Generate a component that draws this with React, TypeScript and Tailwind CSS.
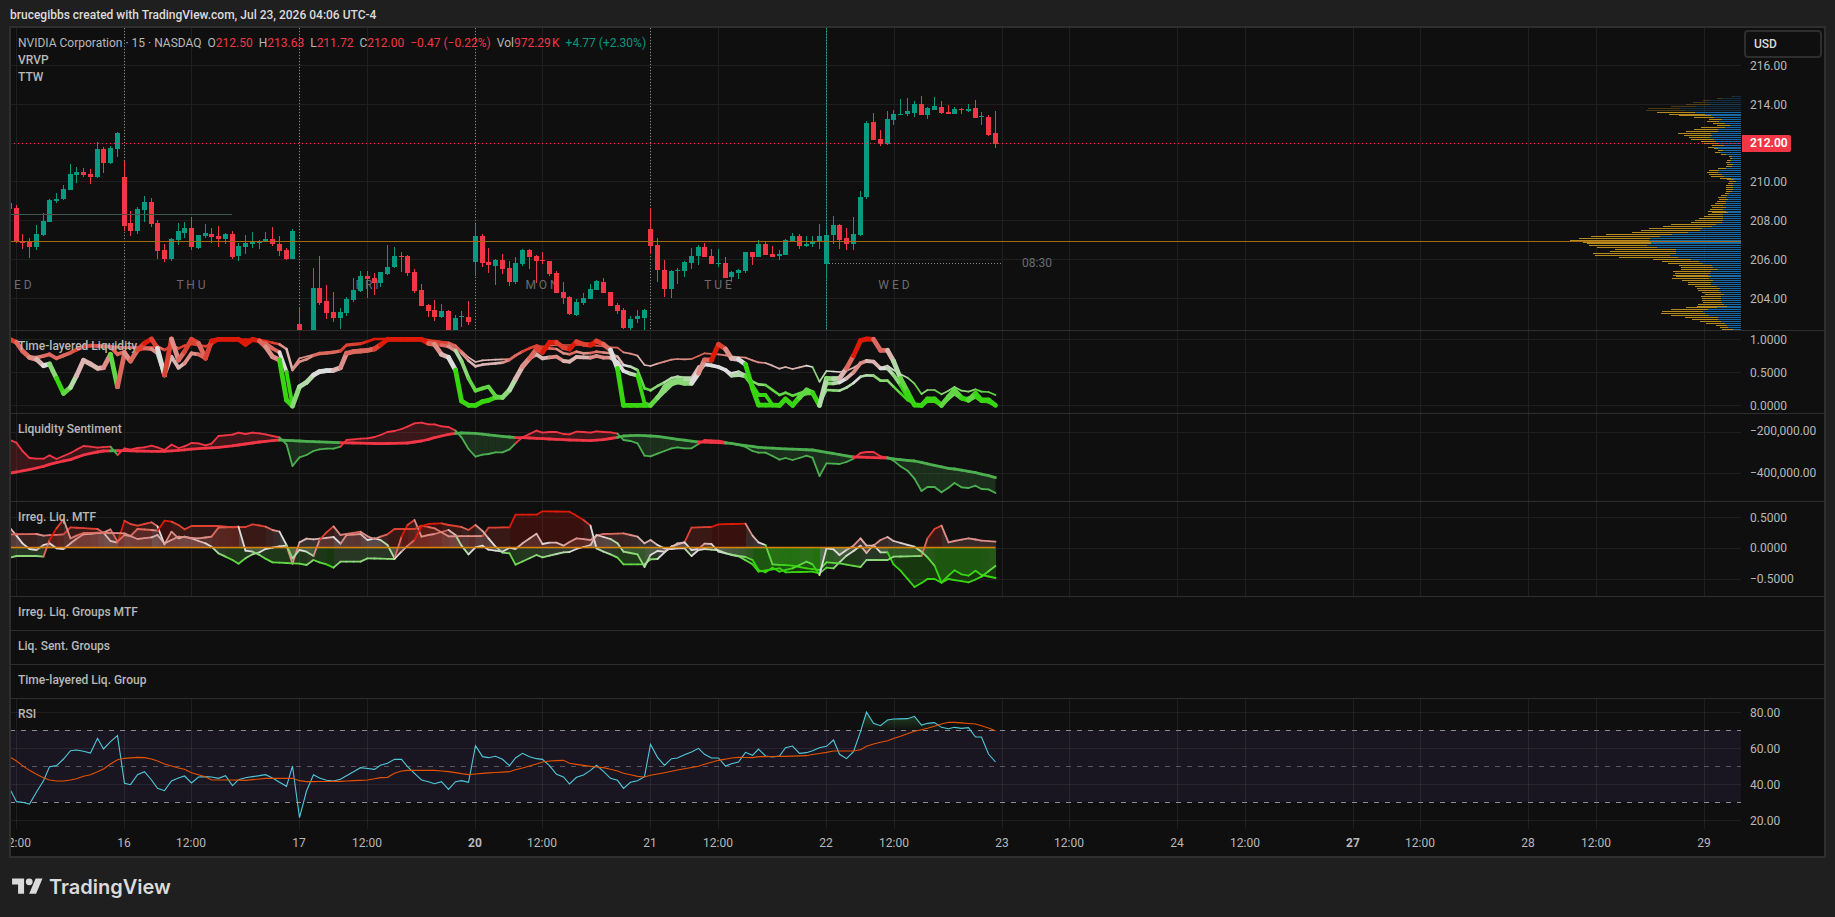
import React from "react";

type Point = [number, number, number?];
type Tick = [number, string];

const UP = "#089981";
const DOWN = "#f23645";
const GRID = "#1f1f1f";
const SUB = 3; // indicator readings are kept at a third of a pixel

// bar index -> pixel column of the plot
const barX = (i: number) => Math.floor(16.1 + 6.753 * i) - 11 + 0.5;

// index, direction, high, body top, body bottom, low
const candles: Record<number, [string, number, number, number, number]> = {};
const rawCandles = `
-1 r 203 203 209 209|0 r 205 208 242 243|1 r 234 241 243 249|2 r 238 242 247 258|3 g 225 234 247 250
4 g 213 221 235 236|5 g 199 200 222 222|6 g 193 199 201 203|7 g 185 189 199 200|8 g 164 174 190 190
9 g 167 172 175 183|10 r 168 172 175 177|11 r 169 174 177 184|12 g 142 149 177 178|13 r 147 149 163 173
14 g 146 148 163 164|15 g 132 133 149 157|16 r 161 177 226 231|17 r 211 223 231 236|18 g 207 209 231 234
19 g 196 202 210 222|20 r 198 202 224 227|21 r 220 223 251 259|22 r 244 250 259 262|23 g 238 239 259 261
24 g 223 231 240 245|25 g 222 228 233 238|26 r 217 228 247 250|27 g 235 235 248 249|28 g 224 233 236 238
29 r 228 234 237 243|30 r 226 236 239 247|31 g 233 234 239 244|32 r 231 234 257 259|33 g 243 246 256 261
34 g 235 243 247 254|35 g 232 242 244 248|36 g 240 241 243 249|37 g 232 239 242 242|38 r 227 239 244 246
39 r 236 244 251 256|40 r 248 250 259 260|41 g 229 231 259 259|42 r 307 324 330 330|44 g 268 288 330 330
45 r 256 288 303 305|46 r 285 301 313 319|47 r 292 312 318 322|48 g 308 312 318 329|49 g 297 299 313 316
50 g 278 290 300 302|51 g 271 276 291 292|52 r 271 276 279 298|53 r 273 278 283 295|54 g 272 272 283 287
55 g 245 267 274 275|56 g 247 256 267 268|57 r 252 256 257 272|58 r 255 256 273 276|59 r 269 272 291 293
60 r 284 290 306 306|61 r 304 305 311 317|62 r 300 310 317 321|63 g 304 311 317 318|64 r 310 311 330 330
65 g 315 318 330 330|66 g 311 316 317 327|67 r 301 317 322 325|68 g 224 236 262 276|69 r 234 236 263 267
70 r 248 262 265 273|71 g 259 260 266 285|72 r 254 260 269 274|73 r 261 268 282 286|74 g 257 263 282 284
75 g 249 250 264 266|76 r 249 250 257 269|77 r 255 256 261 283|78 r 252 260 261 264|79 r 261 261 274 276
80 r 271 273 293 293|81 r 282 292 298 304|82 r 296 297 314 315|83 g 299 302 315 316|84 g 293 298 303 305
85 g 284 289 299 299|86 g 280 281 290 290|87 r 278 282 293 293|88 r 292 292 306 306|89 r 303 305 311 314
90 r 308 310 328 329|91 g 316 319 328 330|92 g 310 316 319 323|93 g 309 310 318 330|94 r 208 229 246 254
95 r 238 245 270 282|96 r 260 270 289 297|97 g 270 271 289 298|98 g 268 270 271 284|99 g 261 262 271 277
100 g 248 256 263 269|101 g 245 247 256 265|102 r 243 247 257 257|103 r 249 256 264 264|104 g 249 263 264 267
105 r 257 263 278 278|106 g 271 272 277 282|107 g 269 270 273 279|108 g 252 252 271 273|109 r 252 252 257 265
110 g 240 244 257 257|111 r 241 244 255 255|112 r 246 254 257 257|113 g 250 254 256 260|114 g 239 240 255 255
115 g 233 236 241 241|116 r 234 236 246 249|117 g 236 244 246 247|118 g 236 241 244 247|119 g 224 236 242 249
120 g 230 235 264 279|121 g 216 225 235 244|122 r 224 225 240 249|123 r 228 238 244 250|124 g 217 234 244 250
125 g 191 197 235 236|126 g 121 123 197 199|127 r 113 122 140 140|128 r 130 139 144 146|129 g 111 119 144 145
130 g 110 114 120 125|131 g 99 114 115 115|132 g 98 111 114 116|133 g 101 104 113 117|134 r 96 104 115 115
135 g 107 108 115 119|136 g 97 106 110 110|137 r 101 107 113 114|138 r 105 112 114 114|139 g 107 109 114 114
140 r 108 109 110 114|141 g 104 109 111 112|142 r 100 108 118 118|143 g 112 116 117 125|144 r 115 117 135 136
145 r 111 133 144 148`;
rawCandles
  .trim()
  .split(/[|\n]/)
  .forEach((row) => {
    const [i, dir, h, t, b, l] = row.trim().split(" ");
    candles[Number(i)] = [dir, Number(h), Number(t), Number(b), Number(l)];
  });

// volume profile rows: total length, up-volume length
const profile = `9,8 24,19 38,32 48,35 55,31 70,45 93,61 95,56 84,46 72,36 62,30 47,27 32,19 34,22 28,16 24,11 40,16
47,23 55,23 63,30 57,29 52,31 50,27 40,25 37,22 29,17 33,27 27,23 23,18 26,21 20,15 12,9 11,9 14,10 15,11 14,8
15,9 23,15 32,22 34,23 32,19 30,17 21,10 14,7 12,5 13,8 15,8 15,8 15,8 15,9 16,12 20,14 23,15 22,13 24,15 26,15
30,18 29,15 31,18 33,15 29,13 33,18 37,18 42,18 46,18 50,19 70,25 78,29 92,39 100,41 109,53 135,69 150,81
162,91 171,92 158,90 154,90 152,94 144,84 126,65 131,65 148,65 146,71 122,63 88,50 79,42 73,38 62,29 60,28
60,23 68,30 66,31 68,33 65,30 69,32 59,28 53,30 53,30 46,24 44,21 43,22 39,20 36,17 40,20 39,20 39,20 38,19
43,17 44,14 55,24 70,33 79,38 80,36 70,32 56,23 49,23 41,20 35,16 25,14 21,13 19,8`
  .split(/\s+/)
  .map((r) => r.split(",").map(Number));

// "index:reading:heat" list, skipped bars are interpolated
const parse = (s: string): Point[] => {
  const keys = s
    .trim()
    .split(/\s+/)
    .map((p) => p.split(":").map(Number));
  const out: Point[] = [];
  keys.forEach(([i, y, c = 5], k) => {
    if (k > 0) {
      const [pi, py, pc = 5] = keys[k - 1];
      for (let j = pi + 1; j < i; j++) {
        const f = (j - pi) / (i - pi);
        out.push([j, py + (y - py) * f, pc + (c - pc) * f]);
      }
    }
    out.push([i, y, c]);
  });
  return out;
};

const layered = [
  {
    width: 1.7,
    points: parse(
      `41:130:6 42:100:7 44:89:7 45:83:8 47:79:8 48:75:8 49:58:9 51:54:9 53:42:10 60:42:10 62:47:10 64:52:9 65:60:9
      66:78:8 67:97:7 68:111:6 69:106:6 72:103:6 73:102:7 74:90:8 75:78:8 76:69:9 77:60:9 78:65:9 79:62:9 80:60:8
      83:60:9 86:62:9 88:67:8 89:68:8 90:82:8 91:86:7 92:92:7 93:120:6 94:123:6 95:116:6 96:110:7 97:104:7
      98:102:7 99:103:7 100:102:7 101:93:8 102:85:8 104:88:8 106:94:7 108:98:7 109:106:7 110:112:7 111:114:7
      112:122:6 113:131:6 114:126:6 115:132:6 117:122:6 118:126:5 119:170:3 120:138:4 122:141:5 123:137:6
      124:128:6 125:115:6 126:106:6 127:110:6 128:128:6 129:122:6 130:135:5 131:148:4 132:158:4 133:176:3
      134:207:2 135:195:3 136:195:3 137:208:2 138:197:3 139:186:3 140:197:3 141:200:3 142:193:3 143:200:2
      144:201:2 145:210:2`
    ),
  },
  {
    width: 2.6,
    points: parse(
      `-1:43:9 0:52:9 1:78:8 2:97:8 3:98:7 5:88:8 6:100:8 8:83:8 10:65:9 11:62:9 14:65:8 16:68:8 20:68:8 21:64:9
      22:75:8 23:63:9 24:70:8 25:62:9 26:57:9 28:64:9 29:58:9 30:44:10 36:44:10 37:48:10 39:58:9 40:72:7 41:135:6
      42:110:7 43:103:7 44:92:7 45:87:8 47:83:8 48:79:8 49:61:9 51:57:9 53:42:10 60:42:10 62:50:9 64:54:9 65:65:8
      66:84:8 67:107:7 68:124:6 69:119:6 70:117:6 72:113:6 73:105:7 74:92:8 75:80:8 76:70:9 77:63:9 78:72:9
      79:70:9 80:72:8 81:85:7 82:88:7 83:80:8 84:85:7 85:84:7 86:80:8 88:85:7 89:95:7 90:120:6 91:125:5 92:135:4
      93:190:2 94:196:2 95:183:3 96:172:3 97:159:4 98:155:4 99:158:4 100:158:4 101:125:6 102:118:6 104:126:5
      106:145:5 107:140:5 108:150:4 109:170:3 110:178:3 111:180:3 112:195:2 113:210:2 114:203:2 115:212:2
      116:205:2 117:197:2 118:200:2 119:237:1 120:195:3 122:197:3 123:188:4 124:174:4 125:155:5 126:151:4
      127:152:4 128:167:3 129:167:3 130:185:3 131:205:2 132:225:1 133:236:0 134:241:0 135:225:1 136:226:1
      137:240:1 138:220:2 139:205:2 140:222:2 142:215:2 145:240:0`
    ),
  },
  {
    width: 3.8,
    points: parse(
      `-1:43:9 0:52:9 1:78:8 2:97:8 3:98:7 5:88:8 6:100:8 8:83:8 10:65:9 11:62:9 14:65:8 15:88:8 16:80:8 17:108:7
      18:75:8 19:70:9 20:72:8 21:85:7 22:150:4 23:95:6 24:128:6 25:115:6 26:85:7 27:88:7 28:100:8 29:50:9
      30:43:10 33:43:10 34:58:10 35:43:10 36:47:10 37:55:9 38:70:8 39:82:8 40:140:5 41:241:0 42:185:3 43:172:4
      44:150:4 45:140:5 47:136:5 48:128:6 49:85:7 50:80:8 52:76:8 53:70:8 54:58:9 55:44:10 60:44:10 61:52:9
      62:55:9 63:60:9 64:64:8 65:77:7 66:108:4 67:160:3 68:197:2 69:190:2 70:185:2 71:213:2 72:217:2 73:195:3
      74:162:4 75:122:6 76:100:6 77:88:7 78:100:6 79:97:6 80:95:7 81:108:7 82:110:6 83:96:6 85:98:6 86:93:7
      87:98:7 88:98:7 89:112:6 90:138:5 91:146:5 92:152:4 93:235:1 94:241:1 95:218:1 96:184:3 97:170:3 98:164:3
      99:166:3 100:168:4 101:140:5 102:118:5 103:121:5 104:126:5 105:135:5 106:152:5 107:150:4 108:154:4
      109:182:2 110:210:1 111:210:1 112:240:0 113:241:0 114:222:1 115:241:0 116:212:1 117:205:2 118:205:2
      119:241:1 120:175:3 121:175:3 122:172:4 123:160:5 124:142:6 125:115:7 126:108:7 127:110:6 128:130:6
      129:130:5 130:150:4 131:180:3 132:215:1 133:240:1 134:241:0 135:228:1 136:228:1 137:241:1 138:220:2
      139:205:3 140:220:2 141:227:1 142:215:2 143:228:1 144:229:1 145:241:0`
    ),
  },
  {
    width: 4.8,
    points: parse(
      `-1:43:9 0:52:9 1:78:8 2:97:8 3:103:7 4:122:6 5:117:5 6:160:3 7:205:1 8:187:2 9:152:4 10:106:6 11:117:6
      12:130:6 13:128:6 14:88:7 15:185:2 16:85:8 17:108:7 18:75:8 19:55:9 20:42:10 21:70:9 22:150:5 23:42:9
      24:105:7 25:80:8 26:43:9 27:55:9 28:100:8 29:48:9 30:43:10 33:43:10 34:58:10 35:43:10 36:48:10 37:65:8
      38:95:7 39:105:7 40:225:1 41:243:0 42:185:3 43:172:4 44:150:4 45:140:5 46:137:5 47:136:5 48:128:6 49:85:7
      50:80:8 52:76:8 53:72:8 54:60:9 55:43:10 60:43:10 61:55:10 62:58:8 63:88:7 64:97:6 65:135:5 66:228:1
      67:241:0 68:241:0 69:230:1 70:226:1 71:217:1 72:217:2 73:195:3 74:162:4 75:125:6 76:100:7 77:72:8 78:82:9
      79:52:10 80:52:10 81:68:9 82:72:9 83:50:10 84:58:9 85:60:9 86:48:10 87:58:9 88:75:8 89:130:5 90:241:0
      94:241:0 95:218:2 96:197:3 97:177:3 98:171:3 99:175:3 100:175:3 101:145:5 102:105:7 103:105:8 104:58:10
      105:72:9 106:100:7 107:103:6 108:118:5 109:190:1 110:240:0 113:241:0 114:222:1 115:241:0 116:218:1
      117:195:2 118:203:2 119:241:0 120:160:4 121:161:3 122:160:4 123:130:6 124:92:8 125:47:10 126:42:10
      127:43:10 128:76:8 129:76:8 130:108:6 131:160:4 132:200:2 133:240:1 134:241:0 135:222:1 136:222:1
      137:241:1 138:215:2 139:195:2 140:218:2 141:225:1 142:205:2 143:225:1 144:225:1 145:241:0`
    ),
  },
];

const sentimentFast = parse(
  `-1:345 0:353 1:378 2:399 3:401 4:401 5:391 6:402 7:393 8:384 9:374 10:363 11:365 12:368 14:365 15:390 16:370
  17:374 18:369 19:367 20:362 21:367 22:375 23:359 24:369 25:364 26:354 27:355 28:361 29:356 30:333 31:331
  32:329 33:323 34:327 35:323 36:325 37:328 38:333 39:337 40:358 41:423 42:397 43:390 44:378 45:373 46:371
  47:371 48:365 49:345 50:343 51:341 52:340 53:336 54:330 55:321 56:318 57:312 58:305 59:295 60:293 61:298
  62:298 63:304 64:306 65:317 66:337 67:372 68:395 69:389 70:387 71:382 72:382 73:373 74:355 75:337 76:327
  77:317 78:323 79:321 80:321 81:327 82:328 83:320 84:321 85:323 86:319 87:321 88:322 89:326 90:345 91:348
  92:355 93:392 94:394 95:386 96:378 97:370 98:367 99:370 100:370 101:357 102:345 104:347 105:351 106:356
  107:360 108:366 109:378 110:383 111:383 112:393 113:404 114:399 115:405 116:399 117:392 118:398 119:453
  120:415 122:417 123:411 124:401 125:384 126:381 127:381 128:394 129:397 130:407 131:424 132:437 133:461
  134:498 135:486 136:486 137:502 138:488 139:474 140:487 141:489 142:482 143:492 144:493 145:504`
);
const sentimentSlow = parse(
  `-1:445 0:441 2:434 4:424 5:418 7:408 8:404 10:390 11:385 12:381 13:378 15:377 16:377 20:379 22:379 24:376
  27:371 30:367 33:360 36:351 39:345 40:346 44:350 48:353 50:354 54:356 58:354 60:348 62:338 64:328 65:325
  66:324 68:325 71:332 74:338 75:338 78:341 82:345 85:347 87:344 89:337 90:333 92:331 95:334 98:343 101:351
  102:351 104:353 106:355 107:359 110:367 113:371 118:375 120:382 124:396 129:399 130:402 133:408 138:430
  139:432 142:443 144:452 145:458`
);

const irregular = [
  parse(
    `-1:607:6 0:632:6 1:655:5 2:672:5 3:675:5 4:660:6 5:655:5 6:670:5 7:672:5 8:655:6 10:628:7 13:623:6 14:648:6
    15:653:6 16:587:10 17:597:9 18:602:9 19:597:9 20:592:9 21:604:8 22:658:5 23:620:7 24:640:7 25:635:6 26:640:6
    27:648:6 28:655:6 29:665:5 30:685:4 31:695:3 32:705:2 33:716:2 34:700:2 35:688:3 36:682:4 37:672:5 39:664:5
    40:662:5 41:716:7 42:652:7 43:641:6 44:643:6 47:636:6 48:656:5 49:630:7 51:627:7 52:645:6 53:640:5 54:645:5
    55:660:4 56:700:4 57:635:8 58:600:10 59:585:9 60:635:7 61:630:7 62:627:7 64:615:8 65:630:6 66:662:4 67:688:4
    68:667:5 69:662:5 70:674:5 72:680:5 73:668:5 74:672:5 75:655:6 77:626:6 78:657:6 79:653:5 80:653:6 81:662:6
    83:640:7 85:645:7 86:632:7 87:627:8 90:625:8 92:635:7 93:655:6 94:645:6 95:660:6 96:670:5 97:672:5 98:670:5
    99:670:5 100:693:4 101:675:5 102:672:5 104:676:4 105:684:4 107:694:3 109:718:2 110:740:1 112:733:1 113:730:1
    114:742:1 118:740:1 119:745:1 120:728:2 121:730:2 122:712:3 123:692:4 124:678:5 125:662:5 126:684:6 127:660:6
    128:682:5 129:682:4 130:718:1 131:737:1 133:786:1 135:762:1 136:762:1 137:773:1 138:752:1 139:736:1 140:748:1
    141:752:1 142:737:1 143:750:1 145:759:1`
  ),
  parse(
    `-1:628:8 3:627:8 4:632:7 7:628:8 8:607:9 12:612:9 13:623:8 14:613:7 15:650:8 16:630:8 17:633:7 18:612:8
    20:615:8 21:617:7 22:587:10 23:590:10 24:600:9 25:613:9 26:603:9 30:603:9 32:607:9 34:606:9 35:598:9 37:605:9
    38:615:8 39:620:7 40:660:5 41:700:3 42:675:4 43:680:5 44:693:4 45:645:7 46:622:9 47:604:9 48:630:7 51:620:8
    52:634:7 53:642:7 54:635:7 55:628:8 56:612:9 59:612:9 60:602:9 61:606:9 62:610:8 64:634:7 69:633:7 70:608:9
    73:607:9 74:569:10 77:569:10 78:559:10 82:560:10 83:572:10 84:585:10 85:602:9 86:670:5 87:680:4 88:688:4
    89:698:3 90:718:2 93:718:2 94:703:3 95:702:3 96:682:5 97:664:5 99:652:6 100:608:9 103:606:9 104:598:10
    108:596:10 109:632:7 110:652:6 111:660:5 112:718:2 115:722:1 117:730:1 119:735:1 120:712:2 122:715:2
    125:726:2 126:705:3 129:705:3 130:695:3 134:693:3 135:640:8 136:612:9 137:602:9 138:652:7 141:640:7
    143:647:7 145:650:7`
  ),
  parse(
    `-1:698:3 0:693:3 3:693:3 4:695:3 5:645:8 6:610:10 7:583:9 8:640:7 10:624:8 12:623:8 16:625:7 18:642:7
    20:637:7 21:630:6 22:655:6 24:635:7 27:640:7 29:635:7 30:608:8 33:605:9 34:677:5 35:680:5 36:690:3 38:712:2
    42:716:2 43:720:2 44:705:3 45:712:2 46:718:2 47:728:1 48:710:3 51:710:3 52:700:3 56:702:3 57:680:5 59:645:8
    60:603:10 61:597:10 63:595:10 64:600:9 66:606:9 67:615:8 68:600:9 69:618:7 70:640:6 71:665:5 72:683:4
    73:685:3 74:719:2 77:690:3 78:697:3 81:682:4 82:681:4 83:672:5 85:660:6 86:630:6 88:642:5 89:655:4 90:680:4
    92:688:3 93:726:3 94:690:4 95:678:5 96:680:5 98:655:6 99:652:6 100:675:5 101:672:5 102:656:7 103:657:6
    104:680:5 106:690:4 108:696:3 109:705:2 110:735:1 111:742:1 112:728:1 113:740:1 115:730:1 117:710:2 118:718:2
    119:750:1 120:670:5 121:673:5 122:690:5 123:675:5 124:662:6 125:640:7 126:662:6 127:662:6 128:645:7 129:636:7
    130:648:6 133:665:5 134:680:4 135:697:3 136:722:2 137:773:1 138:762:1 141:772:1 143:755:1 145:723:2`
  ),
];

const rsi = parse(
  `-1:595 0:635 1:637 2:642 3:606 4:572 5:530 6:527 7:507 8:482 9:480 10:484 11:489 12:445 13:477 14:455 15:437
  16:580 17:584 18:554 19:545 20:570 21:595 22:602 23:573 24:564 25:558 26:579 27:561 28:560 29:561 30:565
  31:557 32:587 33:569 34:563 37:554 38:564 39:577 40:589 41:528 42:683 43:603 44:554 45:564 46:571 47:573
  48:568 49:557 50:545 51:533 53:538 54:526 55:520 56:508 57:508 58:530 59:550 60:570 61:575 62:581 63:575
  64:598 65:575 66:572 67:577 68:467 69:500 70:503 71:499 72:508 73:527 74:504 75:490 76:500 77:506 78:508
  79:527 80:553 81:561 82:582 83:562 84:555 85:541 86:526 87:544 88:565 89:571 90:595 91:577 92:572 93:560
  94:463 95:502 96:526 97:506 98:504 99:494 100:486 101:475 102:493 103:504 104:504 105:528 106:521 107:516
  108:487 109:496 110:477 111:498 112:501 113:498 114:473 115:468 116:490 117:488 118:482 119:473 120:469
  121:450 122:493 123:506 124:485 125:425 126:366 127:400 128:407 129:390 130:387 132:386 133:379 134:405
  135:400 136:398 137:412 138:416 139:412 140:415 141:413 142:441 143:441 144:492 145:516`
);
const rsiAverage = parse(
  `-1:500 0:513 1:527 2:541 3:553 4:563 5:570 6:573 7:573 8:570 9:566 10:559 11:554 12:545 13:537 14:522 15:509
  16:505 18:502 19:503 20:507 21:513 22:522 24:534 25:538 26:548 28:560 29:570 32:570 34:571 37:565 41:565
  42:572 43:575 48:574 52:570 54:563 55:562 56:550 57:543 58:541 62:541 64:545 67:554 69:550 73:545 75:534
  78:516 79:513 81:511 82:520 85:529 87:533 89:543 90:550 92:559 93:561 94:556 97:544 101:529 104:511 106:504
  107:502 109:503 110:500 114:499 117:497 120:487 121:483 124:483 125:479 126:469 127:462 129:452 131:439
  133:424 135:415 137:402 138:397 139:397 142:402 143:407 144:414 145:422`
);

const verticals = [16, 124, 191, 299, 367, 475, 542, 650, 718, 826, 894, 1002, 1069, 1177, 1245, 1353, 1420, 1528, 1596, 1704];
const timeLabels = ["12:00", "16", "12:00", "17", "12:00", "20", "12:00", "21", "12:00", "22", "12:00", "23", "12:00", "24", "12:00", "27", "12:00", "28", "12:00", "29"];
const weekStarts = ["20", "27"];
const dayNames: Tick[] = [
  [16, "W E D"],
  [191, "T H U"],
  [367, "F R I"],
  [542, "M O N"],
  [718, "T U E"],
  [894, "W E D"],
];

const mix = (a: number[], b: number[], f: number) =>
  `rgb(${a.map((v, k) => Math.round(v + (b[k] - v) * f)).join(",")})`;
const heat = (c: number) =>
  c < 5
    ? mix([56, 214, 16], [220, 220, 220], Math.max(0, (c - 1) / 4))
    : mix([220, 220, 220], [221, 26, 8], (c - 5) / 5);

function Grid({ rows, height }: { rows: number[]; height: number }) {
  return (
    <g stroke={GRID} shapeRendering="crispEdges">
      {verticals.map((x) => (
        <line key={x} x1={x - 10.5} x2={x - 10.5} y1={0} y2={height} />
      ))}
      {rows.map((y) => (
        <line key={y} x1="0" x2="100%" y1={y + 0.5} y2={y + 0.5} />
      ))}
    </g>
  );
}

function HeatLine({ points, width, y }: { points: Point[]; width: number; y: (v: number) => number }) {
  return (
    <g strokeWidth={width} strokeLinecap="round">
      {points.slice(1).map(([i, v, c = 5], k) => (
        <line
          key={i}
          x1={barX(points[k][0])}
          y1={y(points[k][1])}
          x2={barX(i)}
          y2={y(v)}
          stroke={heat(c)}
        />
      ))}
    </g>
  );
}

function Pane({
  className,
  title,
  ticks = [],
  children,
}: {
  className: string;
  title: React.ReactNode;
  ticks?: Tick[];
  children?: React.ReactNode;
}) {
  return (
    <section className={`relative flex box-content ${className}`}>
      <svg className="h-full min-w-0 flex-1 overflow-hidden">{children}</svg>
      <div className="relative w-[83px] shrink-0">
        {ticks.map(([y, label]) => (
          <span
            key={label}
            className="absolute left-[9px] -translate-y-1/2 leading-4"
            style={{ top: y + 1 }}
          >
            {label}
          </span>
        ))}
      </div>
      <div className="absolute left-[7px] top-[7px] font-medium leading-[17px]">{title}</div>
    </section>
  );
}

function PriceChart() {
  return (
    <>
      <Grid rows={[37, 76, 115, 153, 192, 231, 270]} height={302} />
      <g fill="#6b6b73" fontSize="12" textAnchor="middle">
        {dayNames.map(([x, name]) => (
          <text key={x} x={x - 11} y={261} className="whitespace-pre">
            {name}
          </text>
        ))}
        <text x={1026} y={239}>
          08:30
        </text>
      </g>
      <g stroke="#868993" strokeDasharray="1 2" shapeRendering="crispEdges">
        {[124, 299, 475, 650].map((x) => (
          <line key={x} x1={x - 10.5} x2={x - 10.5} y1="0" y2="302" />
        ))}
        <line x1="818" x2="991" y1="235.5" y2="235.5" />
      </g>
      <line x1="815.5" x2="815.5" y1="0" y2="302" stroke="#0b6e6b" shapeRendering="crispEdges" />
      <line x1="815.5" x2="815.5" y1="0" y2="302" stroke="#4c9a9a" strokeDasharray="1 2" shapeRendering="crispEdges" />
      <g shapeRendering="crispEdges">
        {Object.entries(candles).map(([i, [dir, high, top, bottom, low]]) => (
          <g key={i} fill={dir === "g" ? UP : DOWN}>
            <rect x={barX(Number(i)) - 0.5} y={high - 28} width={1} height={low - high} />
            <rect x={barX(Number(i)) - 2.5} y={top - 28} width={5} height={bottom - top} />
          </g>
        ))}
      </g>
      <line x1="0" x2="221" y1="186.5" y2="186.5" stroke="#41584f" shapeRendering="crispEdges" />
      {/* the profile hangs on the right edge of the plot */}
      <svg x="100%" overflow="visible" shapeRendering="crispEdges">
        {profile.map(([total, up], n) => {
          const y = Math.floor(96.59 + 1.93939 * n) - 28;
          return (
            <g key={n} opacity={n < 8 ? 0.35 : 1}>
              <rect x={-total} y={y} width={total - up} height={1} fill="#b58a1e" />
              <rect x={-up} y={y} width={up} height={1} fill="#1769a8" />
            </g>
          );
        })}
      </svg>
      <line x1="0" x2="100%" y1="213.5" y2="213.5" stroke="#a5690f" shapeRendering="crispEdges" />
      <line x1="3" x2="100%" y1="115.5" y2="115.5" stroke={DOWN} strokeDasharray="1 3" shapeRendering="crispEdges" />
    </>
  );
}

function Sentiment() {
  const y = (v: number) => v / SUB - 89;
  return (
    <>
      <Grid rows={[18, 59]} height={87} />
      {sentimentFast.slice(1).map(([i, v], k) => {
        const color = v < sentimentSlow[k + 1][1] ? DOWN : "#4caf50";
        const x1 = barX(i - 1);
        const x2 = barX(i);
        const [f1, f2] = [y(sentimentFast[k][1]), y(v)];
        const [s1, s2] = [y(sentimentSlow[k][1]), y(sentimentSlow[k + 1][1])];
        return (
          <g key={i} stroke={color} strokeLinecap="round">
            <path d={`M${x1} ${f1}L${x2} ${f2}V${s2}L${x1} ${s1}Z`} fill={color} fillOpacity="0.2" stroke="none" />
            <line x1={x1} y1={f1} x2={x2} y2={f2} strokeWidth="1.8" />
            <line x1={x1} y1={s1} x2={x2} y2={s2} strokeWidth="2.8" />
          </g>
        );
      })}
    </>
  );
}

function Irregular() {
  const y = (v: number) => v / SUB - 177;
  return (
    <>
      <Grid rows={[15, 46, 77]} height={94} />
      {irregular.map((points, n) => (
        <g key={n}>
          {points.slice(1).map(([i, v, c = 5], k) => (
            <path
              key={i}
              d={`M${barX(i - 1)} ${y(points[k][1])}L${barX(i)} ${y(v)}V45.5H${barX(i - 1)}Z`}
              fill={heat(c)}
              fillOpacity="0.2"
              shapeRendering="crispEdges"
            />
          ))}
        </g>
      ))}
      {irregular.map((points, n) => (
        <HeatLine key={n} points={points} width={1.8} y={y} />
      ))}
      <line x1="0" x2={barX(145)} y1="45.5" y2="45.5" stroke="#d98208" strokeWidth="1.5" />
    </>
  );
}

function Rsi() {
  const y = (v: number) => v / SUB - 109;
  const path = (points: Point[]) => points.map(([i, v]) => `${barX(i)},${y(v)}`).join(" ");
  const peak = rsi.filter(([i]) => i >= 125 && i <= 141);
  return (
    <>
      <defs>
        <linearGradient id="overbought" gradientUnits="userSpaceOnUse" x1="0" x2="0" y1="5" y2="32">
          <stop offset="0" stopColor="#4caf50" stopOpacity="0.5" />
          <stop offset="1" stopColor="#4caf50" stopOpacity="0" />
        </linearGradient>
      </defs>
      <rect x="0" y="31" width="100%" height="72" fill="#1a1621" />
      <g stroke="#ffffff" strokeOpacity="0.07" shapeRendering="crispEdges">
        {verticals.map((x) => (
          <line key={x} x1={x - 10.5} x2={x - 10.5} y1="0" y2="130" />
        ))}
        {[13, 49, 85, 121].map((row) => (
          <line key={row} x1="0" x2="100%" y1={row + 0.5} y2={row + 0.5} />
        ))}
      </g>
      <g stroke="#8b8b95" strokeDasharray="5 6" shapeRendering="crispEdges">
        <line x1="-1" x2="100%" y1="31.5" y2="31.5" />
        <line x1="-1" x2="100%" y1="67.5" y2="67.5" strokeOpacity="0.55" />
        <line x1="-1" x2="100%" y1="103.5" y2="103.5" />
      </g>
      <polygon points={`${barX(125)},31.5 ${path(peak)} ${barX(141)},31.5`} fill="url(#overbought)" />
      <polyline points={path(rsi)} fill="none" stroke="#4fc8dc" strokeWidth="1.1" />
      <polyline points={path(rsiAverage)} fill="none" stroke="#e65100" strokeWidth="1.1" />
    </>
  );
}

export default function App() {
  return (
    <div className="min-h-screen bg-[#1f1f1f] font-['Trebuchet_MS','Roboto',sans-serif] text-xs text-[#b8b8b8]">
      <header className="h-[26px] px-[10px] pt-[7px] font-medium leading-4 text-[#dbdbdb]">
        brucegibbs created with TradingView.com, Jul 23, 2026 04:06 UTC-4
      </header>
      <main className="mx-[9px] border-2 border-[#2e2e2e] bg-[#0f0f0f]">
        <div className="relative">
          <Pane
            className="h-[302px] border-b border-[#2e2e2e]"
            title={
              <>
                <div className="flex gap-1.5 font-normal">
                  <h1>NVIDIA Corporation · 15 · NASDAQ</h1>
                  {[
                    ["O", "212.50"],
                    ["H", "213.63"],
                    ["L", "211.72"],
                    ["C", "212.00"],
                  ].map(([name, value]) => (
                    <span key={name}>
                      {name}
                      <span className="text-[#f23645]">{value}</span>
                    </span>
                  ))}
                  <span className="text-[#f23645]">−0.47 (−0.22%)</span>
                  <span>
                    Vol<span className="text-[#f23645]">972.29{"\u200a"}K</span>
                  </span>
                  <span className="text-[#089981]">+4.77 (+2.30%)</span>
                </div>
                <div>VRVP</div>
                <div>TTW</div>
              </>
            }
            ticks={[
              [37, "216.00"],
              [76, "214.00"],
              [153, "210.00"],
              [192, "208.00"],
              [231, "206.00"],
              [270, "204.00"],
            ]}
          >
            <PriceChart />
          </Pane>
          <button className="absolute right-[2px] top-[2px] h-7 w-[78px] rounded border-2 border-[#2e2e2e] bg-[#0f0f0f] pl-2 text-left font-medium leading-4 text-[#dbdbdb]">
            USD
          </button>
          <span className="absolute right-[33px] top-[107px] w-[49px] rounded-r-xs bg-[#f23645] pl-2 font-semibold leading-[17px] text-white">
            212.00
          </span>
        </div>
        <Pane
          className="h-[82px] border-b border-[#2e2e2e]"
          title="Time-layered Liquidity"
          ticks={[
            [8, "1.0000"],
            [41, "0.5000"],
            [74, "0.0000"],
          ]}
        >
          <Grid rows={[8, 41, 74]} height={82} />
          {layered.map((line) => (
            <HeatLine key={line.width} points={line.points} width={line.width} y={(v) => v / SUB - 6} />
          ))}
        </Pane>
        <Pane
          className="h-[87px] border-b border-[#2e2e2e]"
          title="Liquidity Sentiment"
          ticks={[
            [16, "−200,000.00"],
            [58, "−400,000.00"],
          ]}
        >
          <Sentiment />
        </Pane>
        <Pane
          className="h-[94px] border-b border-[#2e2e2e]"
          title="Irreg. Liq. MTF"
          ticks={[
            [15, "0.5000"],
            [45, "0.0000"],
            [76, "−0.5000"],
          ]}
        >
          <Irregular />
        </Pane>
        <Pane className="h-[33px] border-b border-[#2e2e2e]" title="Irreg. Liq. Groups MTF" />
        <Pane className="h-[33px] border-b border-[#2e2e2e]" title="Liq. Sent. Groups" />
        <Pane className="h-[33px] border-b border-[#2e2e2e]" title="Time-layered Liq. Group" />
        <Pane
          className="h-[130px]"
          title="RSI"
          ticks={[
            [13, "80.00"],
            [49, "60.00"],
            [85, "40.00"],
            [121, "20.00"],
          ]}
        >
          <Rsi />
        </Pane>
        <div className="relative h-[27px] overflow-hidden">
          {verticals.map((x, k) => (
            <span
              key={x}
              className={`absolute top-[6px] -translate-x-1/2 leading-4 ${
                weekStarts.includes(timeLabels[k]) ? "font-bold" : ""
              }`}
              style={{ left: x - 11 }}
            >
              {timeLabels[k]}
            </span>
          ))}
        </div>
      </main>
      <footer className="flex h-[58px] items-center gap-[6px] px-3 text-[#dbdbdb]">
        <svg className="h-6 w-[31px]" viewBox="0 0 36 28" fill="currentColor">
          <path d="M14 22H7V11H0V4h14v18zM28 22h-8l7.5-18h8L28 22z" />
          <circle cx="20" cy="8" r="4" />
        </svg>
        <span className="font-['Inter',sans-serif] text-xl font-semibold leading-6">TradingView</span>
      </footer>
    </div>
  );
}
